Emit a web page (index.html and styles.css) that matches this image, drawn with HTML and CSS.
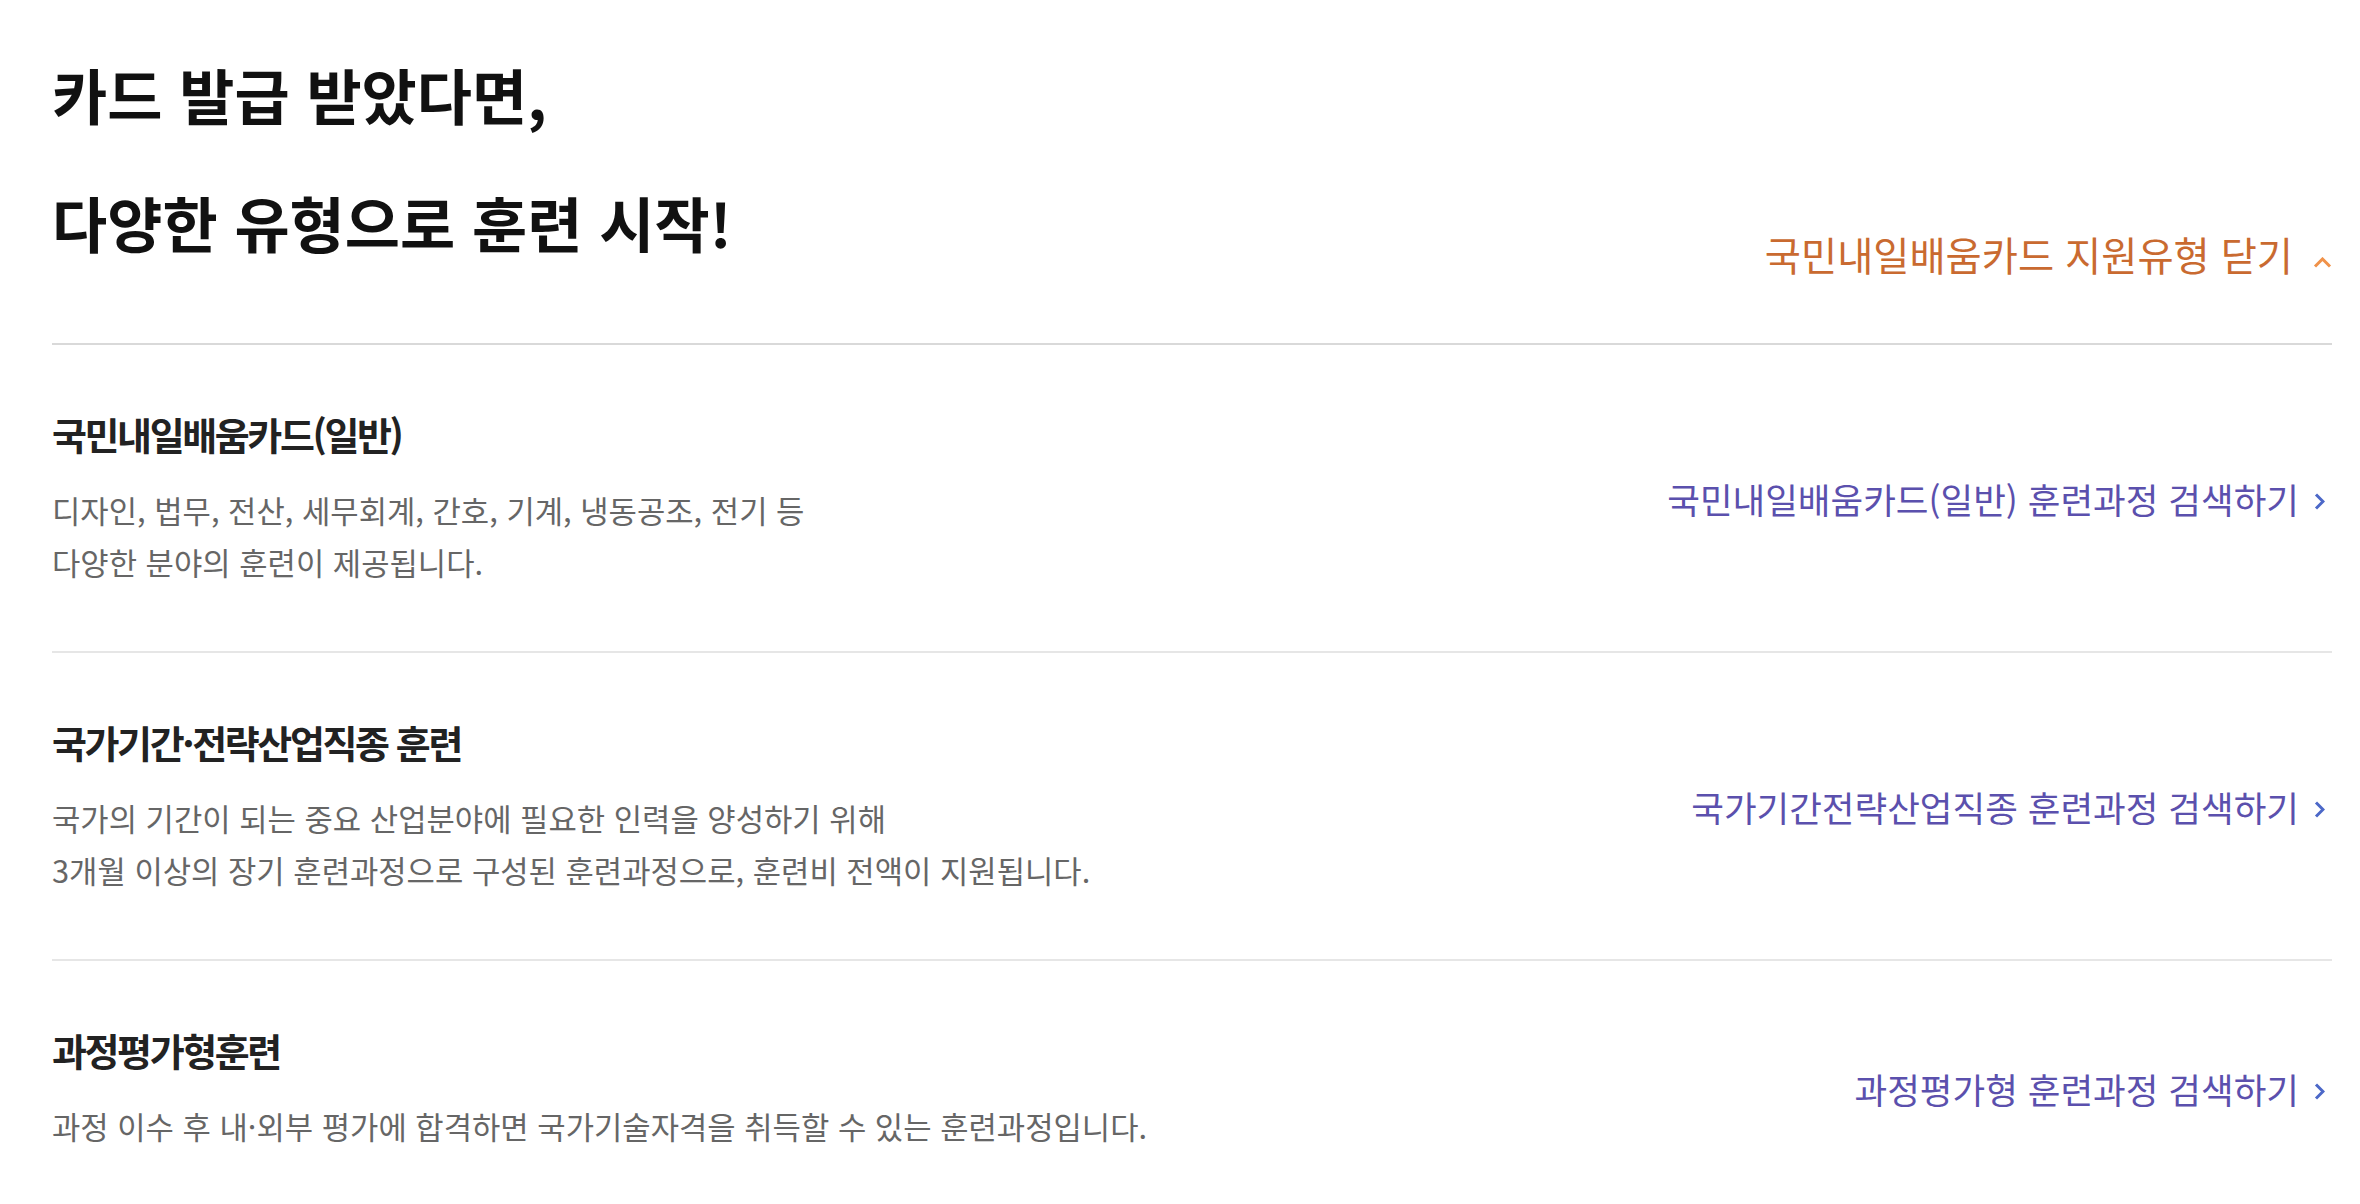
FILE: index.html
```html
<!DOCTYPE html>
<html lang="ko">

<head>
  <meta charset="UTF-8">
  <meta name="viewport" content="width=device-width, initial-scale=1.0">
  <title>국민내일배움카드 지원유형</title>
  <link rel="stylesheet" href="styles.css">
</head>

<body>
  <div class="wrap">
    <div class="head">
      <h2 class="head-title">카드 발급 받았다면,<br>다양한 유형으로 훈련 시작!</h2>
      <a href="#" class="toggle">
        국민내일배움카드 지원유형 닫기
        <svg class="toggle-icon" width="19" height="11" viewBox="0 0 19 11">
          <path d="M2 9.5 L9.5 2 L17 9.5" fill="none" stroke="#f0924a" stroke-width="3" />
        </svg>
      </a>
    </div>

    <ul class="types">
      <li class="type">
        <div class="type-text">
          <h3 class="type-title">국민내일배움카드(일반)</h3>
          <p class="type-desc">디자인, 법무, 전산, 세무회계, 간호, 기계, 냉동공조, 전기 등<br>다양한 분야의 훈련이 제공됩니다.</p>
        </div>
        <a href="#" class="type-link">
          국민내일배움카드(일반) 훈련과정 검색하기
          <svg class="link-icon" width="11" height="17" viewBox="0 0 11 17">
            <path d="M2 1.5 L9 8.5 L2 15.5" fill="none" stroke="#4c68c8" stroke-width="3" />
          </svg>
        </a>
      </li>
      <li class="type">
        <div class="type-text">
          <h3 class="type-title">국가기간·전략산업직종 훈련</h3>
          <p class="type-desc">국가의 기간이 되는 중요 산업분야에 필요한 인력을 양성하기 위해<br>3개월 이상의 장기 훈련과정으로 구성된 훈련과정으로, 훈련비 전액이 지원됩니다.</p>
        </div>
        <a href="#" class="type-link">
          국가기간전략산업직종 훈련과정 검색하기
          <svg class="link-icon" width="11" height="17" viewBox="0 0 11 17">
            <path d="M2 1.5 L9 8.5 L2 15.5" fill="none" stroke="#4c68c8" stroke-width="3" />
          </svg>
        </a>
      </li>
      <li class="type">
        <div class="type-text">
          <h3 class="type-title">과정평가형훈련</h3>
          <p class="type-desc">과정 이수 후 내·외부 평가에 합격하면 국가기술자격을 취득할 수 있는 훈련과정입니다.</p>
        </div>
        <a href="#" class="type-link">
          과정평가형 훈련과정 검색하기
          <svg class="link-icon" width="11" height="17" viewBox="0 0 11 17">
            <path d="M2 1.5 L9 8.5 L2 15.5" fill="none" stroke="#4c68c8" stroke-width="3" />
          </svg>
        </a>
      </li>
    </ul>
  </div>
</body>

</html>
```

FILE: styles.css
```css
* {
  font-family: "Noto Sans CJK KR", "Noto Sans", sans-serif;
  box-sizing: border-box;
}

body {
  margin: 0;
  background: #fff;
}

a {
  text-decoration: none;
}

.wrap {
  padding: 30px 28px 0 52px;
}

.head {
  display: flex;
  justify-content: space-between;
  align-items: flex-end;
  padding-bottom: 57px;
  border-bottom: 2px solid #d9d9d9;
}

.head-title {
  margin: 0;
  font-size: 60px;
  line-height: 128px;
  font-weight: 700;
  letter-spacing: 0;
  color: #111;
}

.toggle {
  display: flex;
  align-items: center;
  gap: 20px;
  font-size: 39.3px;
  line-height: 64px;
  color: #c96a30;
}

.toggle-icon {
  display: block;
  margin-top: 16px;
}

.types {
  list-style: none;
  margin: 0;
  padding: 0;
}

.type {
  display: flex;
  justify-content: space-between;
  align-items: center;
  padding: 64px 0 63px;
  border-bottom: 2px solid #e6e6e6;
}

.type-title {
  margin: 0;
  font-size: 38px;
  line-height: 50px;
  font-weight: 700;
  letter-spacing: -2.4px;
  color: #222;
}

.type-desc {
  margin: 25px 0 0;
  font-size: 30.8px;
  line-height: 52px;
  color: #666;
}

.type-link {
  display: flex;
  align-items: center;
  gap: 15px;
  padding-right: 7px;
  font-size: 35.5px;
  line-height: 48px;
  color: #5b50ad;
}

.link-icon {
  display: block;
  margin-top: 5px;
}
```
